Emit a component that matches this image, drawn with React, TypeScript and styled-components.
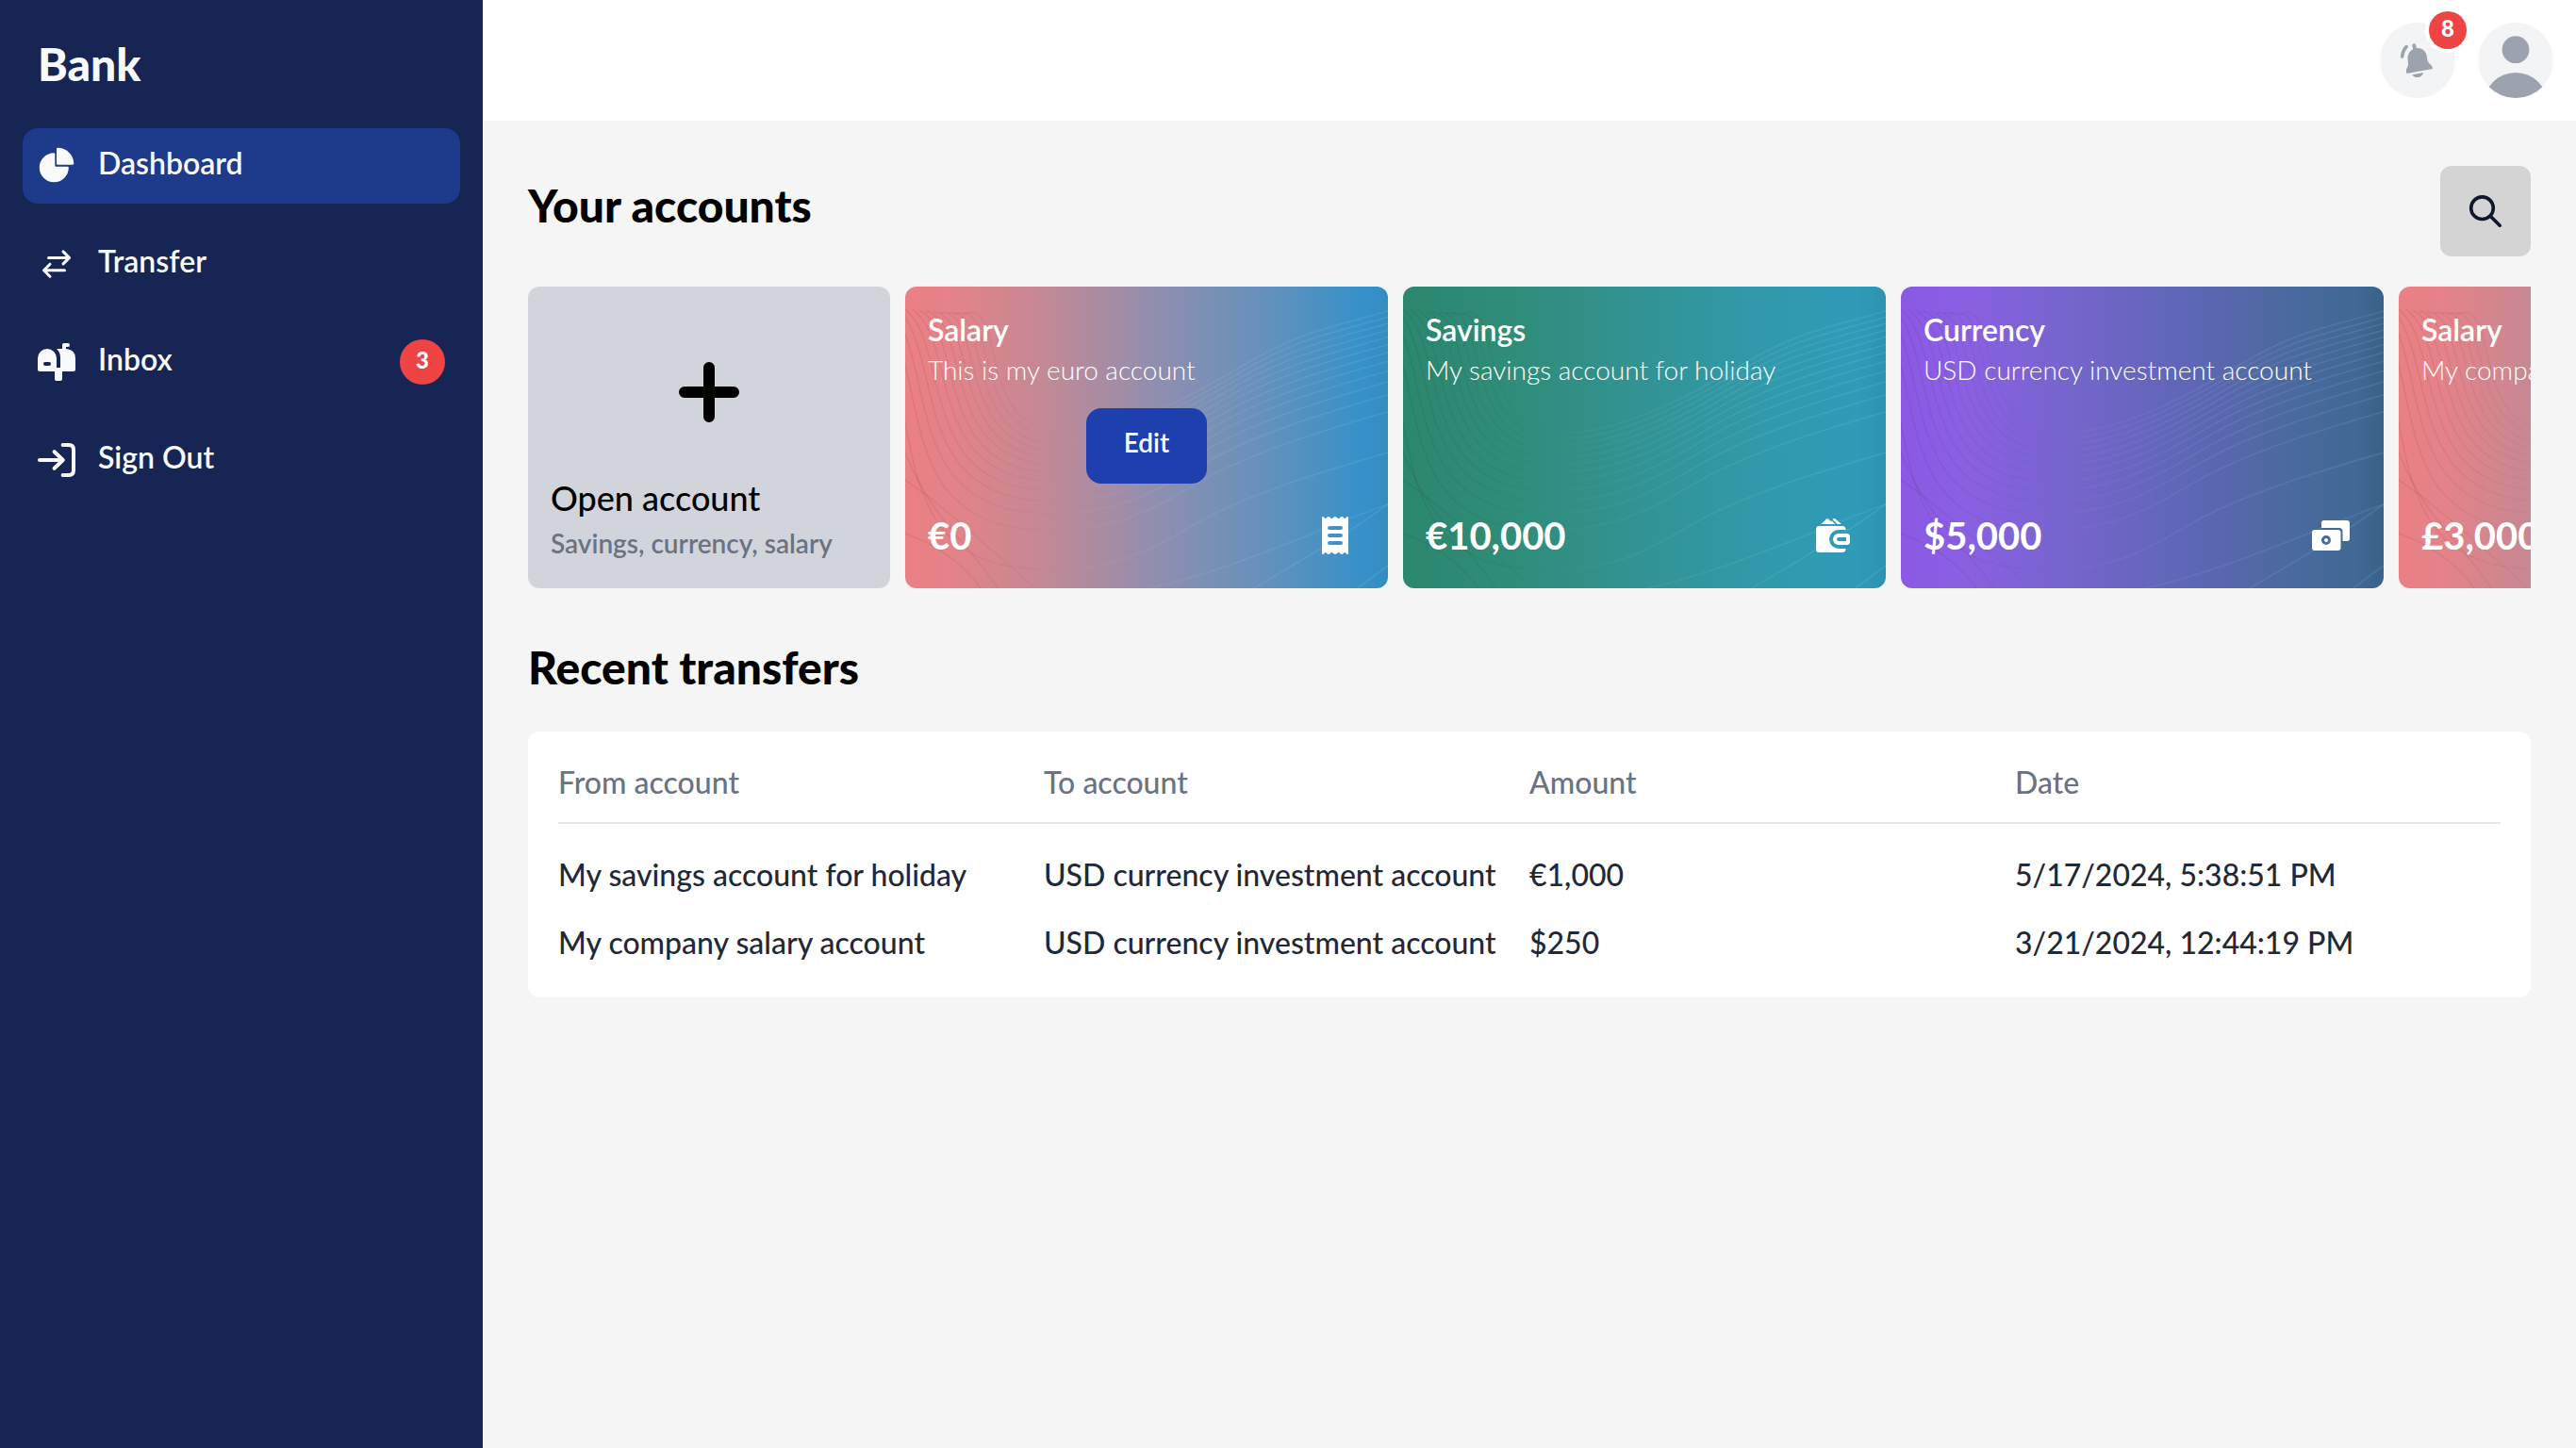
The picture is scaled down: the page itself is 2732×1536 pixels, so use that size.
import React, { useId } from "react";
import styled, { createGlobalStyle, css } from "styled-components";

const GlobalStyle = createGlobalStyle`
  *, *::before, *::after { box-sizing: border-box; }
  body {
    margin: 0;
    background: #f5f5f5;
    color: #000;
    font-family: Lato, "Noto Sans", sans-serif;
    font-size: 32px;
    line-height: 40px;
  }
  h1, h2, h3, p { margin: 0; font-weight: inherit; font-size: inherit; }
  button { font: inherit; border: 0; cursor: pointer; color: inherit; }
  a { color: inherit; text-decoration: none; }
`;

/* ---------- layout ---------- */

const Page = styled.div`
  display: flex;
  min-height: 100vh;
`;

const Sidebar = styled.aside`
  flex: 0 0 512px;
  padding: 24px;
  background: #172554;
  color: #f8fafc;
`;

const Brand = styled.h1`
  padding: 20px 16px 44px;
  font-size: 48px;
  line-height: 48px;
  font-weight: 900;
`;

const Nav = styled.nav`
  display: flex;
  flex-direction: column;
  gap: 24px;
`;

const NavLink = styled.a<{ $active?: boolean }>`
  display: flex;
  align-items: center;
  gap: 24px;
  height: 80px;
  padding: 0 16px;
  border-radius: 16px;
  font-weight: 600;
  background: ${(p) => (p.$active ? "#1e3a8a" : "transparent")};
`;

const NavLabel = styled.span`
  flex: 1;
  padding-bottom: 6px;
`;

const badge = css`
  display: flex;
  justify-content: center;
  align-items: center;
  padding-bottom: 4px;
  border-radius: 50%;
  background: #ef4444;
  color: #fff;
  font-size: 24px;
  line-height: 32px;
  font-weight: 900;
`;

const NavBadge = styled.span`
  ${badge}
  width: 48px;
  height: 48px;
`;

const Body = styled.div`
  flex: 1;
  min-width: 0;
`;

const TopBar = styled.header`
  display: flex;
  justify-content: flex-end;
  align-items: center;
  gap: 24px;
  height: 128px;
  padding: 0 24px;
  background: #fff;
`;

const RoundButton = styled.button`
  position: relative;
  width: 80px;
  height: 80px;
  padding: 0;
  border-radius: 50%;
  background: #f3f4f6;
  color: #9ca3af;

  svg { display: block; border-radius: 50%; }
`;

const AlertBadge = styled.span`
  ${badge}
  position: absolute;
  top: -12px;
  right: -12px;
  width: 40px;
  height: 40px;
  box-shadow: 0 0 0 4px #fff;
`;

const Main = styled.main`
  display: flex;
  flex-direction: column;
  gap: 60px;
  padding: 48px;
`;

const Section = styled.section`
  display: flex;
  flex-direction: column;
  gap: 32px;
`;

const SectionHead = styled.div`
  display: flex;
  justify-content: space-between;
  align-items: center;
`;

const Title = styled.h2`
  padding-bottom: 12px;
  font-size: 48px;
  line-height: 48px;
  font-weight: 900;
`;

const SearchButton = styled.button`
  width: 96px;
  height: 96px;
  padding: 0;
  border-radius: 12px;
  background: #d4d4d4;
  color: #0f172a;

  svg { display: block; }
`;

/* ---------- account cards ---------- */

const CardRow = styled.div`
  display: flex;
  gap: 16px;
  overflow-x: auto;
  scrollbar-width: none;
`;

const OpenCard = styled.button`
  flex: 0 0 384px;
  display: flex;
  flex-direction: column;
  gap: 8px;
  height: 320px;
  padding: 80px 24px 30px;
  border-radius: 12px;
  background: #d1d5db;
  text-align: left;

  svg { align-self: center; margin-bottom: auto; }
`;

const OpenTitle = styled.span`
  font-size: 36px;
  line-height: 44px;
  font-weight: 500;
`;

const OpenHint = styled.span`
  font-size: 28px;
  line-height: 36px;
  font-weight: 600;
  color: #6b7280;
`;

const Card = styled.article<{ $fill: string }>`
  position: relative;
  flex: 0 0 512px;
  display: flex;
  flex-direction: column;
  justify-content: space-between;
  height: 320px;
  padding: 24px;
  border-radius: 12px;
  overflow: hidden;
  background: ${(p) => p.$fill};
  color: #fff;
`;

const WaveLayer = styled.svg`
  position: absolute;
  inset: 0;
  width: 100%;
  height: 100%;
`;

const CardText = styled.div`
  position: relative;
  display: flex;
  flex-direction: column;
  gap: 4px;
  padding-top: 2px;
`;

const CardName = styled.h3`
  font-weight: 600;
`;

const CardNote = styled.p`
  font-size: 28px;
  line-height: 36px;
  font-weight: 300;
  white-space: nowrap;
`;

const EditButton = styled.button`
  position: relative;
  align-self: center;
  height: 80px;
  padding: 0 40px 8px;
  border-radius: 16px;
  background: #1e40af;
  font-size: 28px;
  line-height: 36px;
  font-weight: 600;
`;

const CardFoot = styled.div`
  position: relative;
  display: flex;
  justify-content: space-between;
  align-items: center;
`;

const Amount = styled.span`
  font-size: 40px;
  line-height: 48px;
  font-weight: 700;
`;

/* ---------- transfers ---------- */

const TableCard = styled.div`
  padding: 34px 32px 38px;
  border-radius: 12px;
  background: #fff;
`;

const Table = styled.table`
  width: 100%;
  table-layout: fixed;
  border-collapse: separate;
  border-spacing: 0;
  font-weight: 500;
  color: #1f2937;

  th {
    padding: 0 0 22px;
    border-bottom: 2px solid #e5e7eb;
    text-align: left;
    font-weight: 500;
    color: #6b7280;
  }
  td {
    padding: 0 0 32px;
    white-space: nowrap;
  }
  tbody tr:first-child td { padding-top: 34px; }
  tbody tr:last-child td { padding-bottom: 0; }
`;

/* ---------- icons ---------- */

const PieIcon = () => (
  <svg width="40" height="40" viewBox="0 0 40 40" fill="currentColor" aria-hidden="true">
    <path d="M17.3 6.2Q18.3 6.2 18.3 7.2V19.7Q18.3 20.7 19.3 20.7H31.8Q32.8 20.7 32.8 21.7A15.5 15.5 0 1 1 17.3 6.2Z" />
    <path d="M20 1.9Q20 .7 21.2 .7A17.2 17.2 0 0 1 38.3 17.6Q38.3 18.7 37.1 18.7H21.2Q20 18.7 20 17.5Z" />
  </svg>
);

const TransferIcon = () => (
  <svg width="40" height="40" viewBox="0 0 40 40" fill="none" stroke="currentColor" strokeWidth="3" strokeLinecap="round" strokeLinejoin="round" aria-hidden="true">
    <path d="M11.5 13.4H33.5M27 6.9L33.5 13.4L27 19.9M28.5 26.7H6.5M13 20.2L6.5 26.7L13 33.2" />
  </svg>
);

const MailboxIcon = () => (
  <svg width="40" height="40" viewBox="0 0 40 40" fill="currentColor" aria-hidden="true">
    <path fillRule="evenodd" d="M10 6A10 10 0 0 1 20 16V26H18V30H2Q0 30 0 28V16A10 10 0 0 1 10 6ZM8 20A2 2 0 0 0 8 24H12A2 2 0 0 0 12 20Z" />
    <path d="M20 6H26V2Q26 0 28 0H32Q34 0 34 2T32 4H30V6Q40 7 40 16V28Q40 30 38 30H26V38Q26 40 24 40H20Q18 40 18 38V26H24V15Q24 9.5 20 6Z" />
  </svg>
);

const SignOutIcon = () => (
  <svg width="40" height="40" viewBox="0 0 40 40" fill="none" stroke="currentColor" strokeWidth="4" strokeLinecap="round" strokeLinejoin="round" aria-hidden="true">
    <path d="M2 20H26.5M17.6 11.2L26.8 20L17.6 28.8M26.6 4H33Q38 4 38 9V31Q38 36 33 36H26.6" />
  </svg>
);

const BellIcon = () => (
  <svg width="80" height="80" viewBox="0 0 80 80" fill="currentColor" aria-hidden="true">
    <path d="M36.3 24.2L37.4 30" stroke="currentColor" strokeWidth="4" strokeLinecap="round" />
    <path d="M28.2 25.6Q24.4 29.6 23.6 36" fill="none" stroke="currentColor" strokeWidth="3.6" strokeLinecap="round" />
    <path d="M39 27C33 27.8 28.8 33 29.6 39.5C30 43.5 30.4 45 29 47.5C27.8 49.6 27.7 51.5 28.4 53.9L55.9 49C55.6 46.5 55 45.5 53 43.8C51 42 50.4 40.5 50 36.5C49.2 30.5 45 26.4 39 27Z" />
    <path d="M34.2 55.2L46.2 53.1C45 56.6 42.8 58 40.2 58C37.6 58 35.4 57.2 34.2 55.2Z" />
  </svg>
);

const AvatarIcon = () => (
  <svg width="80" height="80" viewBox="0 0 80 80" fill="currentColor" aria-hidden="true">
    <circle cx="40" cy="28.7" r="14.4" />
    <circle cx="40" cy="87" r="34" />
  </svg>
);

const SearchIcon = () => (
  <svg width="96" height="96" viewBox="0 0 96 96" fill="none" stroke="currentColor" strokeWidth="3.6" strokeLinecap="round" aria-hidden="true">
    <circle cx="44.5" cy="44.7" r="11.8" />
    <path d="M53.2 53.2L63.2 63.2" />
  </svg>
);

const PlusIcon = () => (
  <svg width="64" height="64" viewBox="0 0 64 64" stroke="currentColor" strokeWidth="12" strokeLinecap="round" aria-hidden="true">
    <path d="M32 6V58M6 32H58" />
  </svg>
);

const ReceiptIcon = () => (
  <svg width="64" height="64" viewBox="0 0 64 64" fill="currentColor" aria-hidden="true">
    <path
      fillRule="evenodd"
      d="M18 13Q18 11 20 12.6L21.6 14.3L24.2 12.2Q25 11.6 25.8 12.2L28.4 14.3L31.2 12.2Q32 11.6 32.8 12.2L35.6 14.3L38.2 12.2Q39 11.6 39.8 12.2L42.4 14.3L44 12.6Q46 11 46 13V51Q46 53 44 51.4L42.4 49.7L39.8 51.8Q39 52.4 38.2 51.8L35.6 49.7L32.8 51.8Q32 52.4 31.2 51.8L28.4 49.7L25.8 51.8Q25 52.4 24.2 51.8L21.6 49.7L20 51.4Q18 53 18 51ZM26 22A2 2 0 0 0 26 26H38A2 2 0 0 0 38 22ZM26 30A2 2 0 0 0 26 34H38A2 2 0 0 0 38 30ZM26 38A2 2 0 0 0 26 42H38A2 2 0 0 0 38 38Z"
    />
  </svg>
);

const WalletIcon = () => (
  <svg width="64" height="64" viewBox="0 0 64 64" fill="currentColor" aria-hidden="true">
    <path d="M19.5 20L25 14.6Q26 13.6 27 14.6L29.5 17L30.5 16.2Q31.4 17 34 20Z" />
    <path d="M31.5 15Q33 13.2 34.6 14.4L40.8 20H36.5Z" />
    <path d="M17 22H42Q45.5 22 45.5 26H38A10 10 0 0 0 38 46H45.5Q45.5 50 42 50H17Q14 50 14 47V25Q14 22 17 22Z" />
    <path fillRule="evenodd" d="M38 30H46.5Q50 30 50 33.5V38.5Q50 42 46.5 42H38A6 6 0 0 1 38 30ZM38 34A2 2 0 0 0 38 38H46V34Z" />
  </svg>
);

const CashIcon = () => (
  <svg width="64" height="64" viewBox="0 0 64 64" fill="currentColor" aria-hidden="true">
    <path d="M25 16H49Q52 16 52 19V35Q52 38 49 38H44.5V28Q44.5 24 40.5 24H22V19Q22 16 25 16Z" />
    <path fillRule="evenodd" d="M15 26H39.5Q42.5 26 42.5 29V45Q42.5 48 39.5 48H15Q12 48 12 45V29Q12 26 15 26ZM27 32A5 5 0 1 0 27 42A5 5 0 1 0 27 32Z" />
    <circle cx="27" cy="37" r="2" />
  </svg>
);

/* Contour lines printed across every card */
const steps = Array.from({ length: 13 }, (_, i) => i / 12);

const contour = (t: number) => {
  const startX = -30 + 90 * t;
  const startY = 20 + 10 * t;
  const lowX = 150 + 20 * t;
  const lowY = 300 - 145 * Math.sqrt(t);
  const endY = 176 - 150 * Math.sqrt(t);
  const bendX = 300 + 60 * t;
  const bendY = (lowY + endY) / 2 + 18 - 26 * t;
  return (
    `M${startX} ${startY}C${startX + 50} ${lowY - 150} ${startX + 10} ${lowY} ${lowX} ${lowY}` +
    `C${lowX + 60} ${lowY} ${bendX - 60} ${bendY + 36} ${bendX} ${bendY}` +
    `S${450} ${endY + 18} 512 ${endY}`
  );
};

const Waves = () => {
  const id = useId();
  return (
    <WaveLayer viewBox="0 0 512 320" preserveAspectRatio="none" fill="none" aria-hidden="true">
      <defs>
        <linearGradient id={id} gradientUnits="userSpaceOnUse" x1="0" y1="0" x2="512" y2="0">
          <stop offset="0" stopColor="#400020" stopOpacity="0.08" />
          <stop offset="0.25" stopColor="#400020" stopOpacity="0.03" />
          <stop offset="0.4" stopColor="#fff" stopOpacity="0.03" />
          <stop offset="1" stopColor="#8fe0ff" stopOpacity="0.13" />
        </linearGradient>
      </defs>
      <g stroke={`url(#${id})`} strokeWidth="1.6">
        {steps.map((t) => (
          <path key={t} d={contour(t)} />
        ))}
        <path d="M240 324C340 305 430 260 512 231" />
        <path d="M360 326C420 290 470 262 512 231" />
        <path d="M480 320Q498 306 512 296" />
        <path d="M0 176C30 250 60 262 98 320" />
        <path d="M0 205C50 240 70 262 150 330" />
        <path d="M0 262C30 272 60 292 80 320" />
      </g>
    </WaveLayer>
  );
};

/* ---------- data ---------- */

const fills = {
  salary: "linear-gradient(90deg, #ea8085 0%, #e38388 10%, #c38995 29%, #928eae 51%, #6591bc 74%, #3891c8 94%, #338cc2 100%)",
  savings: "linear-gradient(90deg, #2b876e 0%, #2f8c76 20%, #329392 48%, #3199ab 74%, #2f9bb8 94%, #2c93b2 100%)",
  currency: "linear-gradient(90deg, #8b59e4 0%, #8a60e3 13%, #7665cd 34%, #6366bb 54%, #4f69a3 76%, #406994 94%, #38628a 100%)",
};

type Account = {
  name: string;
  note: string;
  amount: string;
  fill: string;
  Icon: React.FC;
  editable?: boolean;
};

const accounts: Account[] = [
  { name: "Salary", note: "This is my euro account", amount: "€0", fill: fills.salary, Icon: ReceiptIcon, editable: true },
  { name: "Savings", note: "My savings account for holiday", amount: "€10,000", fill: fills.savings, Icon: WalletIcon },
  { name: "Currency", note: "USD currency investment account", amount: "$5,000", fill: fills.currency, Icon: CashIcon },
  { name: "Salary", note: "My company salary account", amount: "£3,000", fill: fills.salary, Icon: ReceiptIcon },
];

const transfers = [
  ["My savings account for holiday", "USD currency investment account", "€1,000", "5/17/2024, 5:38:51 PM"],
  ["My company salary account", "USD currency investment account", "$250", "3/21/2024, 12:44:19 PM"],
];

const links = [
  { label: "Dashboard", Icon: PieIcon, active: true },
  { label: "Transfer", Icon: TransferIcon },
  { label: "Inbox", Icon: MailboxIcon, count: 3 },
  { label: "Sign Out", Icon: SignOutIcon },
];

export default function App() {
  return (
    <>
      <GlobalStyle />
      <Page>
        <Sidebar>
          <Brand>Bank</Brand>
          <Nav>
            {links.map(({ label, Icon, active, count }) => (
              <NavLink key={label} href="#" $active={active}>
                <Icon />
                <NavLabel>{label}</NavLabel>
                {count && <NavBadge>{count}</NavBadge>}
              </NavLink>
            ))}
          </Nav>
        </Sidebar>
        <Body>
          <TopBar>
            <RoundButton type="button" aria-label="Notifications">
              <BellIcon />
              <AlertBadge>8</AlertBadge>
            </RoundButton>
            <RoundButton type="button" aria-label="Profile">
              <AvatarIcon />
            </RoundButton>
          </TopBar>
          <Main>
            <Section>
              <SectionHead>
                <Title>Your accounts</Title>
                <SearchButton type="button" aria-label="Search">
                  <SearchIcon />
                </SearchButton>
              </SectionHead>
              <CardRow>
                <OpenCard type="button">
                  <PlusIcon />
                  <OpenTitle>Open account</OpenTitle>
                  <OpenHint>Savings, currency, salary</OpenHint>
                </OpenCard>
                {accounts.map(({ name, note, amount, fill, Icon, editable }) => (
                  <Card key={note} $fill={fill}>
                    <Waves />
                    <CardText>
                      <CardName>{name}</CardName>
                      <CardNote>{note}</CardNote>
                    </CardText>
                    {editable && <EditButton type="button">Edit</EditButton>}
                    <CardFoot>
                      <Amount>{amount}</Amount>
                      <Icon />
                    </CardFoot>
                  </Card>
                ))}
              </CardRow>
            </Section>
            <Section>
              <Title>Recent transfers</Title>
              <TableCard>
                <Table>
                  <thead>
                    <tr>
                      {["From account", "To account", "Amount", "Date"].map((h) => (
                        <th key={h} scope="col">{h}</th>
                      ))}
                    </tr>
                  </thead>
                  <tbody>
                    {transfers.map((row) => (
                      <tr key={row[3]}>
                        {row.map((cell, i) => (
                          <td key={i}>{cell}</td>
                        ))}
                      </tr>
                    ))}
                  </tbody>
                </Table>
              </TableCard>
            </Section>
          </Main>
        </Body>
      </Page>
    </>
  );
}
